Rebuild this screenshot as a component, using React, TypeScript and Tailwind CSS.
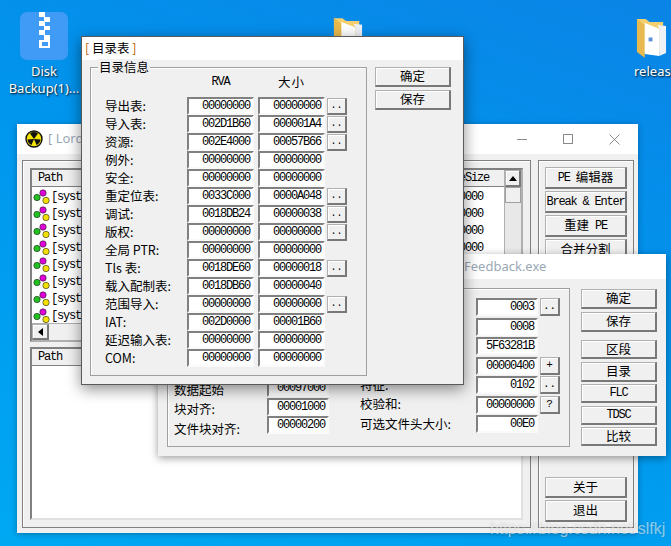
import React from 'react';
import clsx from 'clsx';

const cjk = "font-['Noto_Sans_CJK_SC','Liberation_Sans',sans-serif]";
const mono = "font-['Liberation_Mono','Noto_Sans_CJK_SC',monospace]";

const dirRows = [
  { label: '导出表:', rva: '00000000', size: '00000000', more: true },
  { label: '导入表:', rva: '002D1B60', size: '000001A4', more: true },
  { label: '资源:', rva: '002E4000', size: '00057B66', more: true },
  { label: '例外:', rva: '00000000', size: '00000000', more: false },
  { label: '安全:', rva: '00000000', size: '00000000', more: false },
  { label: '重定位表:', rva: '0033C000', size: '0000A048', more: true },
  { label: '调试:', rva: '0018DB24', size: '00000038', more: true },
  { label: '版权:', rva: '00000000', size: '00000000', more: true },
  { label: '全局 PTR:', rva: '00000000', size: '00000000', more: false },
  { label: 'Tls 表:', rva: '0018DE60', size: '00000018', more: true },
  { label: '载入配制表:', rva: '0018DB60', size: '00000040', more: false },
  { label: '范围导入:', rva: '00000000', size: '00000000', more: true },
  { label: 'IAT:', rva: '002D0000', size: '00001B60', more: false },
  { label: '延迟输入表:', rva: '00000000', size: '00000000', more: false },
  { label: 'COM:', rva: '00000000', size: '00000000', more: false },
];

const leftRows = [
  ['数据起始', '00097000'],
  ['块对齐:', '00001000'],
  ['文件块对齐:', '00000200'],
];

// labels of the first four rows sit behind the directory dialog
const rightRows = [
  { label: '', value: '0003', btn: '..' },
  { label: '', value: '0008', btn: '' },
  { label: '', value: '5F63281B', btn: '' },
  { label: '', value: '00000400', btn: '+' },
  { label: '特征:', value: '0102', btn: '..' },
  { label: '校验和:', value: '00000000', btn: '?' },
  { label: '可选文件头大小:', value: '00E0', btn: '' },
];

function Field({ value, className }: { value: string; className?: string }) {
  return (
    <div
      className={clsx(
        'flex items-center justify-end bg-white border-2 border-t-[#808080] border-l-[#808080] border-r-[#fafafa] border-b-[#fafafa] pr-[2px] text-[12px] tracking-[-1.2px] text-black leading-none',
        mono,
        className,
      )}
    >
      {value}
    </div>
  );
}

function Btn({ children, className }: { children: React.ReactNode; className?: string }) {
  return (
    <div
      className={clsx(
        'flex items-center justify-center bg-[#f0f0f0] border border-[#b0b0b0] border-r-2 border-b-2 border-r-[#787878] border-b-[#787878] text-black leading-none whitespace-nowrap shadow-[inset_1px_1px_0_#ffffff]',
        className,
      )}
    >
      {children}
    </div>
  );
}

function Titlebar({ children, h }: { children: React.ReactNode; h: string }) {
  return <div className={clsx('flex items-center bg-white shrink-0', h)}>{children}</div>;
}

function Balls() {
  return (
    <svg width="17" height="16" viewBox="0 0 17 16" className="shrink-0">
      <circle cx="10" cy="4" r="3.2" fill="#e000d8" stroke="#222" strokeWidth="0.6" />
      <circle cx="4" cy="8.5" r="3.2" fill="#22c020" stroke="#222" strokeWidth="0.6" />
      <circle cx="13" cy="11.5" r="3.2" fill="#f4e000" stroke="#222" strokeWidth="0.6" />
    </svg>
  );
}

function ListHeader({ children }: { children: React.ReactNode }) {
  return (
    <div className={clsx('flex items-center h-[17px] shrink-0 bg-[#f0f0f0] border-b border-[#808080] pl-[6px] text-[12px] tracking-[-1.2px] text-black', mono)}>
      {children}
    </div>
  );
}

function LordWindow() {
  const rows = [0, 1, 2, 3, 4, 5, 6, 7];
  return (
    <div className="absolute left-[17px] top-[124px] w-[621px] h-[409px] flex flex-col bg-[#f0f0f0] shadow-[0_1px_6px_rgba(0,0,0,0.3)]">
      <Titlebar h="h-[30px]">
        <svg width="18" height="18" viewBox="0 0 18 18" className="ml-[8px]">
          <circle cx="9" cy="9" r="8" fill="#f4e400" stroke="#111" strokeWidth="1.4" />
          <path d="M9 9 L5 3.6 A6.7 6.7 0 0 1 13 3.6 Z M9 9 L15.6 9.6 A6.7 6.7 0 0 1 11.5 15 Z M9 9 L6.5 15 A6.7 6.7 0 0 1 2.4 9.6 Z" fill="#111" />
        </svg>
        <span className="ml-[5px] text-[13px] text-[#9aa7b4] font-['Noto_Sans','Noto_Sans_CJK_SC',sans-serif]">[ LordPE Deluxe ]</span>
        <div className="ml-auto flex items-center text-[#8a8a8a]">
          <span className="w-[10px] h-px bg-[#8a8a8a] mr-[36px]" />
          <span className="w-[10px] h-[10px] border border-[#8a8a8a] mr-[36px]" />
          <svg width="11" height="11" viewBox="0 0 11 11" className="mr-[18px]">
            <path d="M0.5 0.5 L10.5 10.5 M10.5 0.5 L0.5 10.5" stroke="#8a8a8a" strokeWidth="1" />
          </svg>
        </div>
      </Titlebar>
      <div className="flex flex-1 pl-[5px] pr-[4px] pt-[6px] pb-[5px] gap-[7px]">
        <div className="flex-1 flex flex-col gap-[5px] border border-[#808080] shadow-[inset_1px_1px_0_#fff] p-[7px]">
          <div className="h-[174px] flex border-2 border-t-[#808080] border-l-[#808080] border-r-[#b0b0b0] border-b-[#b0b0b0] bg-white">
            <div className="flex-1 flex flex-col min-w-0">
              <ListHeader>
                <span>Path</span>
                <span className="ml-auto mr-[15px]">ImageSize</span>
              </ListHeader>
              <div className="flex-1 overflow-hidden pt-[1px]">
                {rows.map((r) => (
                  <div key={r} className={clsx('flex items-center h-[17px] pl-[1px] text-[12px] tracking-[-1.2px] text-black', mono)}>
                    <Balls />
                    <span className="ml-[1px]">[system]</span>
                    <span className="ml-auto mr-[21px]">00010000</span>
                  </div>
                ))}
              </div>
              <div className="h-[17px] shrink-0 flex bg-[#f0f0f0] border-t border-[#b0b0b0]">
                <Btn className="w-[17px]">
                  <svg width="5" height="8" viewBox="0 0 5 8"><path d="M5 0 V8 L0 4 Z" fill="#000" /></svg>
                </Btn>
              </div>
            </div>
            <div className="w-[17px] flex flex-col bg-[#e8e8e8] border-l border-[#b0b0b0]">
              <Btn className="h-[17px]">
                <svg width="8" height="5" viewBox="0 0 8 5"><path d="M0 5 H8 L4 0 Z" fill="#000" /></svg>
              </Btn>
              <div className="h-[16px] bg-[#f0f0f0] border border-[#a0a0a0]" />
            </div>
          </div>
          <div className="flex-1 flex flex-col border-2 border-t-[#808080] border-l-[#808080] border-r-[#e0e0e0] border-b-[#e0e0e0] bg-white">
            <ListHeader>Path</ListHeader>
          </div>
        </div>
        <div className="w-[96px] flex flex-col gap-[2px] border border-[#808080] shadow-[inset_1px_1px_0_#fff] pt-[6px] pb-[5px] px-[6px]">
          <Btn className={clsx('h-[22px] shrink-0 text-[12.5px]', cjk)}>
            <span className={clsx('tracking-[-1.2px] text-[12px] mr-[6px]', mono)}>PE</span>编辑器
          </Btn>
          <Btn className={clsx('h-[22px] shrink-0 text-[12px] tracking-[-1.2px]', mono)}>Break &amp; Enter</Btn>
          <Btn className={clsx('h-[22px] shrink-0 text-[12.5px]', cjk)}>
            重建<span className={clsx('tracking-[-1.2px] text-[12px] ml-[6px]', mono)}>PE</span>
          </Btn>
          <Btn className={clsx('h-[22px] shrink-0 text-[12.5px]', cjk)}>合并分割</Btn>
          <Btn className={clsx('h-[21px] shrink-0 mt-auto text-[12.5px]', cjk)}>关于</Btn>
          <Btn className={clsx('h-[22px] shrink-0 text-[12.5px]', cjk)}>退出</Btn>
        </div>
      </div>
    </div>
  );
}

function HeaderWindow() {
  return (
    <div className="absolute left-[158px] top-[254px] w-[508px] h-[202px] flex flex-col bg-[#f0f0f0] shadow-[0_2px_8px_rgba(0,0,0,0.4)]">
      <Titlebar h="h-[25px]">
        <span className="ml-[306px] text-[13px] text-[#9aa7b4] font-['Noto_Sans',sans-serif]">Feedback.exe</span>
      </Titlebar>
      <div className="flex flex-1 pl-[9px] pr-[9px] pt-[9px] pb-[9px] gap-[11px]">
        <div className="flex-1 flex border border-[#a0a0a0] shadow-[inset_1px_1px_0_#fff] pt-[9px] pl-[6px]">
          <div className="w-[93px] flex flex-col justify-end pb-[8px] gap-[1.5px]">
            {leftRows.map(([label]) => (
              <div key={label} className={clsx('h-[18px] flex items-center text-[12.5px] leading-none text-black whitespace-nowrap', cjk)}>{label}</div>
            ))}
          </div>
          <div className="w-[62px] flex flex-col justify-end pb-[12px] gap-[0.5px]">
            {leftRows.map(([label, value]) => (
              <Field key={label} value={value} className="h-[18px] w-[62px]" />
            ))}
          </div>
          <div className="ml-[31px] w-[116px] flex flex-col gap-[2px]">
            {rightRows.map((r) => (
              <div key={r.value} className={clsx('h-[17.5px] flex items-center text-[12.5px] leading-none text-black whitespace-nowrap', cjk)}>{r.label}</div>
            ))}
          </div>
          <div className="flex flex-col gap-[2px]">
            {rightRows.map((r) => (
              <div key={r.value} className="h-[17.5px] flex gap-[2px]">
                <Field value={r.value} className="h-[18px] w-[62px]" />
                {r.btn && <Btn className={clsx('w-[20px] h-[18px] text-[11px]', mono)}>{r.btn}</Btn>}
              </div>
            ))}
          </div>
        </div>
        <div className="w-[76px] pt-[1px] flex flex-col gap-[2.5px]">
          <Btn className={clsx('h-[20px] text-[12.5px]', cjk)}>确定</Btn>
          <Btn className={clsx('h-[20px] mb-[6px] text-[12.5px]', cjk)}>保存</Btn>
          <Btn className={clsx('h-[19px] text-[12.5px]', cjk)}>区段</Btn>
          <Btn className={clsx('h-[20px] text-[12.5px]', cjk)}>目录</Btn>
          <Btn className={clsx('h-[19px] text-[12px] tracking-[-1.2px]', mono)}>FLC</Btn>
          <Btn className={clsx('h-[19px] text-[12px] tracking-[-1.2px]', mono)}>TDSC</Btn>
          <Btn className={clsx('h-[19px] text-[12.5px]', cjk)}>比较</Btn>
        </div>
      </div>
    </div>
  );
}

function DirectoryDialog() {
  return (
    <div className="absolute left-[81px] top-[36px] w-[383px] h-[349px] flex flex-col bg-[#f0f0f0] border border-[#5a5a5a] shadow-[0_4px_14px_rgba(0,0,0,0.45)]">
      <Titlebar h="h-[23px]">
        <span className={clsx('ml-[3px] text-[12.5px] text-black', cjk)}>
          <span className="text-[#c06000]">[</span> 目录表 <span className="text-[#c06000]">]</span>
        </span>
      </Titlebar>
      <div className="flex flex-1 pl-[8px] pr-[12px] pt-[7px] pb-[8px] gap-[8px]">
        <div className="relative w-[277px] border border-[#a0a0a0] shadow-[inset_1px_1px_0_#fff] pl-[14px] pt-[5px]">
          <span className={clsx('absolute left-[7px] top-[-9px] bg-[#f0f0f0] px-[1px] text-[12.5px] leading-[16px] text-black', cjk)}>目录信息</span>
          <div className="flex h-[18px] mb-[6px] pl-[82px] items-center text-black">
            <span className={clsx('w-[67px] text-center tracking-[-1.2px] text-[12px]', mono)}>RVA</span>
            <span className={clsx('ml-[4px] w-[67px] text-center text-[12.5px] tracking-[1px]', cjk)}>大小</span>
          </div>
          <div className="flex flex-col">
            {dirRows.map((row) => (
              <div key={row.label} className="flex items-center h-[18px]">
                <span className={clsx('w-[82px] text-[12.5px] leading-none text-black whitespace-nowrap', cjk)}>{row.label}</span>
                <Field value={row.rva} className="w-[67px] h-[18px]" />
                <Field value={row.size} className="w-[67px] h-[18px] ml-[4px]" />
                {row.more && <Btn className={clsx('w-[20px] h-[17px] ml-[2px] text-[10px]', mono)}>..</Btn>}
              </div>
            ))}
          </div>
        </div>
        <div className="flex-1 flex flex-col gap-[3px]">
          <Btn className={clsx('h-[20px] text-[12.5px]', cjk)}>确定</Btn>
          <Btn className={clsx('h-[20px] text-[12.5px]', cjk)}>保存</Btn>
        </div>
      </div>
    </div>
  );
}

function FolderIcon({ className }: { className: string }) {
  return (
    <svg viewBox="0 0 32 42" className={className}>
      <path d="M1 2 H10 L14 5 H28 V36 L1 36 Z" fill="#f3cf6f" />
      <path d="M1 2 L9 8 V42 L1 36 Z" fill="#e8b94e" />
      <path d="M9 6 L24 12 V40 L9 38 Z" fill="#ffffff" />
      <path d="M22 8 L31 9 V37 L24 40 V12 Z" fill="#eef1f5" />
      <rect x="13" y="21" width="4" height="4" fill="#5b8fd8" />
    </svg>
  );
}

function DesktopLabel({ children, className }: { children: React.ReactNode; className: string }) {
  return (
    <div className={clsx("absolute text-center text-[13px] leading-[17px] text-white font-['Noto_Sans',sans-serif] [text-shadow:1px_1px_2px_#000]", className)}>
      {children}
    </div>
  );
}

export default function App() {
  return (
    <div className="relative w-[671px] h-[546px] overflow-hidden bg-[linear-gradient(200deg,#0a84e6_0%,#0096ee_45%,#00a8f2_100%)]">
      <div className="absolute left-[20px] top-[12px] w-[48px] h-[48px] rounded-[7px] bg-[#3f9bf6] flex flex-col items-center pl-[1px]">
        <svg width="11" height="36" viewBox="0 0 11 36">
          <path d="M0 0 H6 V5 H0 Z M5 5 H11 V10 H5 Z M0 9 H6 V14 H0 Z M5 14 H11 V18 H5 Z M0 18 H6 V23 H0 Z" fill="#fff" />
          <path d="M5 23 H11 V36 H0 V28 H5 Z" fill="#fff" />
          <rect x="3" y="30" width="6" height="4" fill="#3f9bf6" />
        </svg>
      </div>
      <DesktopLabel className="left-[4px] top-[63px] w-[80px]">Disk<br />Backup(1)...</DesktopLabel>
      <FolderIcon className="absolute left-[333px] top-[16px] w-[30px] h-[40px]" />
      <FolderIcon className="absolute left-[636px] top-[17px] w-[31px] h-[41px]" />
      <DesktopLabel className="left-[634px] top-[63px] whitespace-nowrap">releas</DesktopLabel>

      <LordWindow />
      <HeaderWindow />
      <DirectoryDialog />

      <div className="absolute left-[490px] top-[517px] text-[16px] text-white/55 whitespace-nowrap font-['Liberation_Sans',sans-serif] [text-shadow:0_0_2px_rgba(0,0,0,0.2)]">https://blog.csdn.net/slfkj</div>
    </div>
  );
}
